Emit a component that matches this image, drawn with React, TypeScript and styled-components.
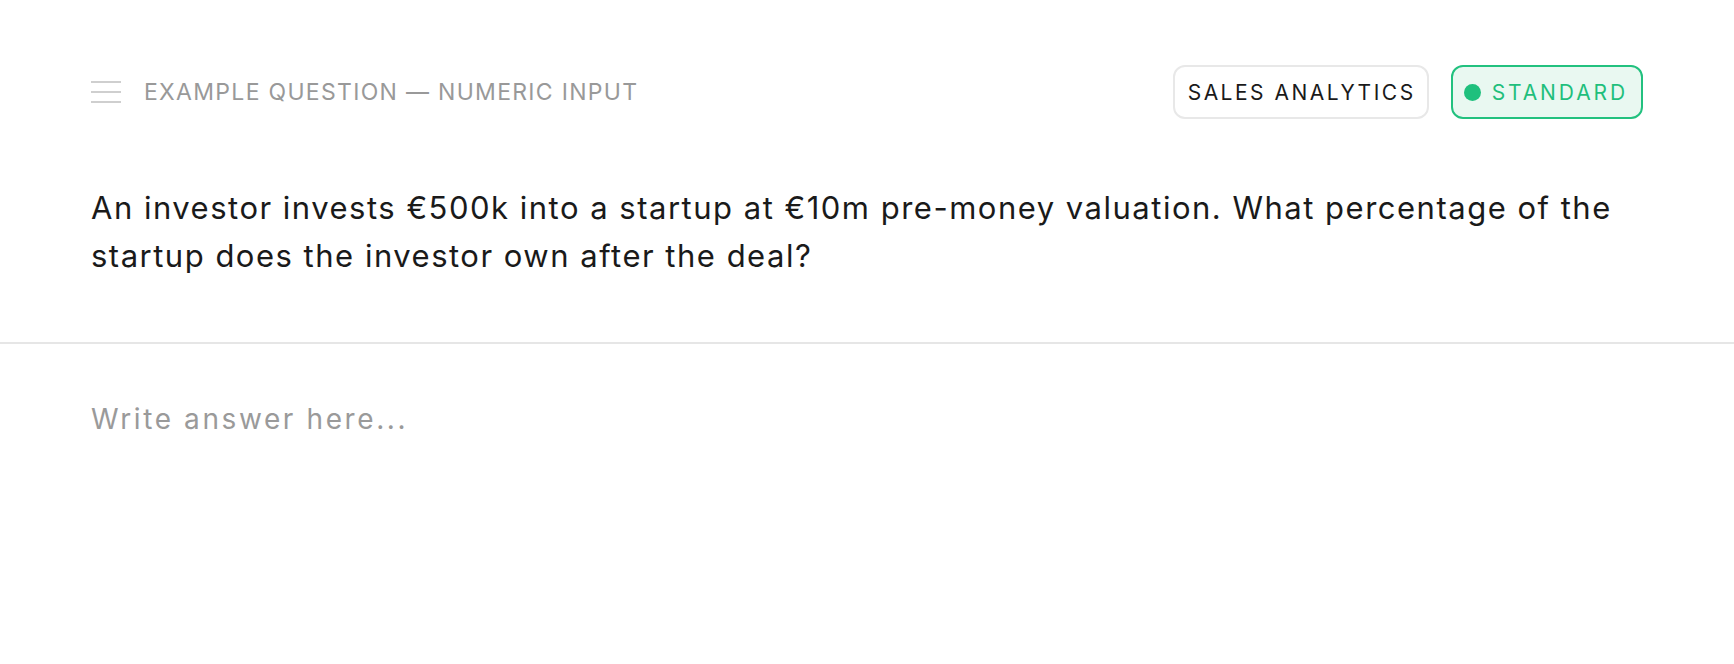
import React from "react";
import styled, { createGlobalStyle } from "styled-components";

const GlobalStyle = createGlobalStyle`
  html, body {
    margin: 0;
    padding: 0;
    background: #ffffff;
  }
  body {
    font-family: Inter, "Noto Sans", "Liberation Sans", sans-serif;
    -webkit-font-smoothing: antialiased;
  }
`;

const Page = styled.div`
  display: flex;
  flex-direction: column;
  min-height: 664px;
  background: #ffffff;
`;

const QuestionSection = styled.section`
  display: flex;
  flex-direction: column;
  padding: 65px 91px 62px 91px;
  border-bottom: 2px solid #e6e6e6;
`;

const Header = styled.header`
  display: flex;
  align-items: center;
  justify-content: space-between;
  height: 54px;
`;

const HeaderLeft = styled.div`
  display: flex;
  align-items: center;
  gap: 23px;
`;

const MenuIcon = styled.div`
  display: flex;
  flex-direction: column;
  justify-content: space-between;
  width: 30px;
  height: 22px;
`;

const MenuLine = styled.span`
  display: block;
  height: 2px;
  background: #cfcfcf;
`;

const Label = styled.span`
  font-size: 23px;
  letter-spacing: 1.3px;
  color: #999999;
  text-transform: uppercase;
`;

const Tags = styled.div`
  display: flex;
  align-items: center;
  gap: 22px;
`;

const Tag = styled.span<{ $variant?: "neutral" | "green" }>`
  display: inline-flex;
  align-items: center;
  gap: 11px;
  height: 54px;
  box-sizing: border-box;
  padding: ${(p) => (p.$variant === "green" ? "0 13px 0 11px" : "0 11px 0 13px")};
  border-radius: 12px;
  font-size: 21px;
  letter-spacing: ${(p) => (p.$variant === "green" ? "2.9px" : "2.5px")};
  text-transform: uppercase;
  border: 2px solid ${(p) => (p.$variant === "green" ? "#22c17f" : "#e8e8e8")};
  background: ${(p) => (p.$variant === "green" ? "#e9f8f1" : "#ffffff")};
  color: ${(p) => (p.$variant === "green" ? "#1fbf7c" : "#1a1a1a")};
`;

const Dot = styled.span`
  width: 17px;
  height: 17px;
  border-radius: 50%;
  background: #1fc07d;
`;

const Question = styled.p`
  margin: 65px 0 0 0;
  font-size: 31px;
  line-height: 48px;
  letter-spacing: 1.5px;
  color: #1a1a1a;
`;

const AnswerSection = styled.section`
  padding: 53px 91px 48px;
`;

const AnswerInput = styled.textarea`
  display: block;
  width: 100%;
  box-sizing: border-box;
  border: none;
  outline: none;
  resize: none;
  padding: 0;
  font-family: inherit;
  font-size: 28px;
  line-height: 45px;
  letter-spacing: 2.6px;
  color: #1a1a1a;
  background: transparent;
  &::placeholder {
    color: #9a9a9a;
  }
`;

export default function App() {
  return (
    <Page>
      <GlobalStyle />
      <QuestionSection>
        <Header>
          <HeaderLeft>
            <MenuIcon>
              <MenuLine />
              <MenuLine />
              <MenuLine />
            </MenuIcon>
            <Label>Example question — Numeric input</Label>
          </HeaderLeft>
          <Tags>
            <Tag>Sales Analytics</Tag>
            <Tag $variant="green">
              <Dot />
              Standard
            </Tag>
          </Tags>
        </Header>
        <Question>
          An investor invests €500k into a startup at €10m pre-money valuation. What
          percentage of the startup does the investor own after the deal?
        </Question>
      </QuestionSection>
      <AnswerSection>
        <AnswerInput rows={4} placeholder="Write answer here..." />
      </AnswerSection>
    </Page>
  );
}
